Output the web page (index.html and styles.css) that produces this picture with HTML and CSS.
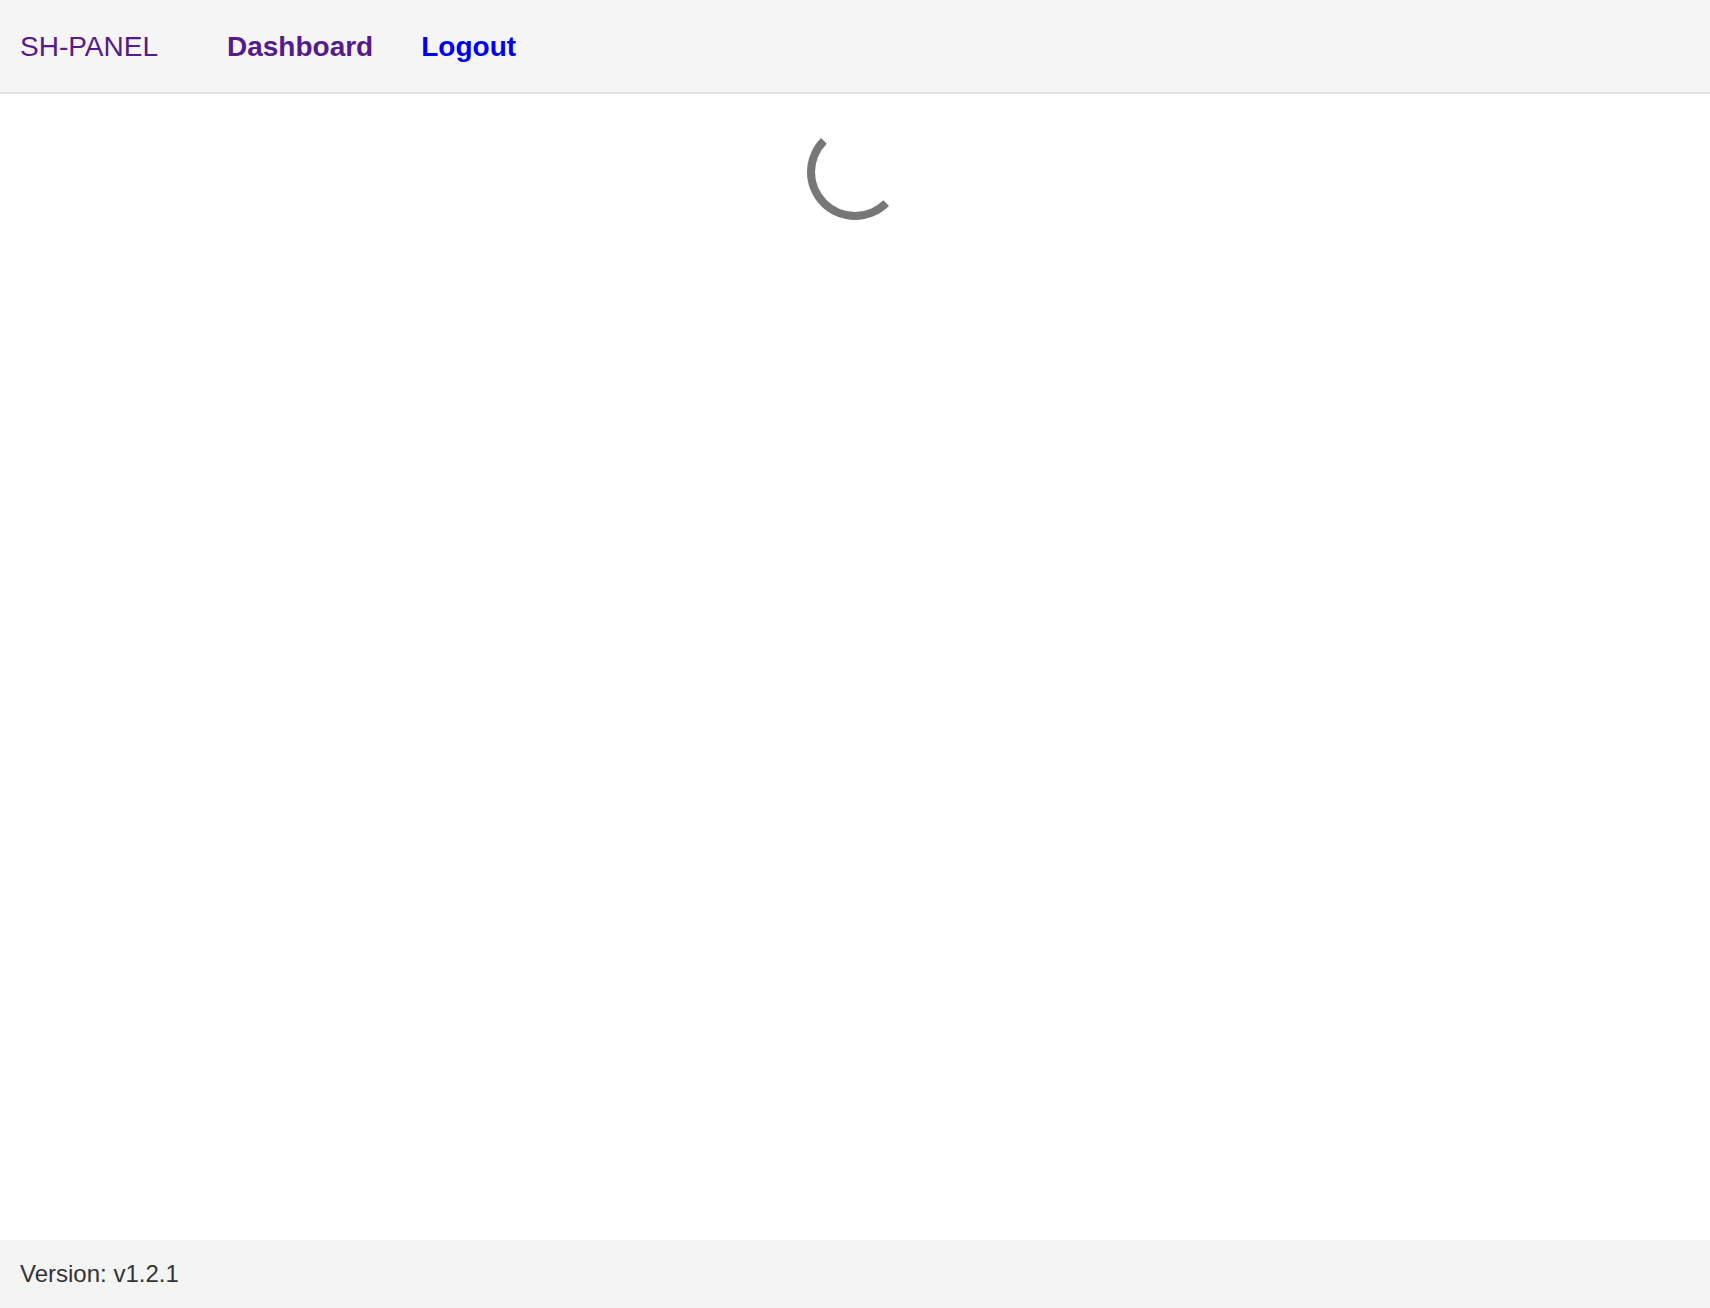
FILE: index.html
```html
<!DOCTYPE html>
<html lang="en">
<head>
<meta charset="utf-8">
<meta name="viewport" content="width=device-width, initial-scale=1">
<title>SH-PANEL</title>
<link rel="stylesheet" href="styles.css">
</head>
<body>
<header class="header">
  <a class="brand" href="#home">SH-PANEL</a>
  <nav class="nav">
    <a class="nav-link nav-link-visited" href="#dashboard">Dashboard</a>
    <a class="nav-link" href="#logout">Logout</a>
  </nav>
</header>
<main class="main">
  <div class="spinner" role="status" aria-label="Loading"></div>
</main>
<footer class="footer">Version: v1.2.1</footer>
</body>
</html>
```
FILE: styles.css
```css
* {
  box-sizing: border-box;
}

body {
  margin: 0;
  min-height: 100vh;
  display: flex;
  flex-direction: column;
  font-family: "Liberation Sans", Arial, sans-serif;
  color: #333;
  background: #fff;
}

.header {
  display: flex;
  align-items: center;
  gap: 69px;
  padding: 30px 20px 28px;
  font-size: 28px;
  line-height: 34px;
  background: #f5f5f5;
  border-bottom: 2px solid #e2e2e2;
}

.brand,
.nav-link-visited.nav-link {
  color: #551a8b;
}

.brand,
.nav-link {
  text-decoration: none;
}

.nav {
  display: flex;
  gap: 48px;
}

.nav-link {
  color: #00e;
  font-weight: bold;
}

.main {
  flex: 1;
  padding: 30px 20px;
}

.spinner {
  width: 96px;
  height: 96px;
  margin: 0 auto;
  border: 8px solid #777;
  border-top-color: transparent;
  border-right-color: transparent;
  border-radius: 50%;
}

.footer {
  padding: 20px;
  font-size: 24px;
  line-height: 28px;
  background: #f4f4f4;
}
```
